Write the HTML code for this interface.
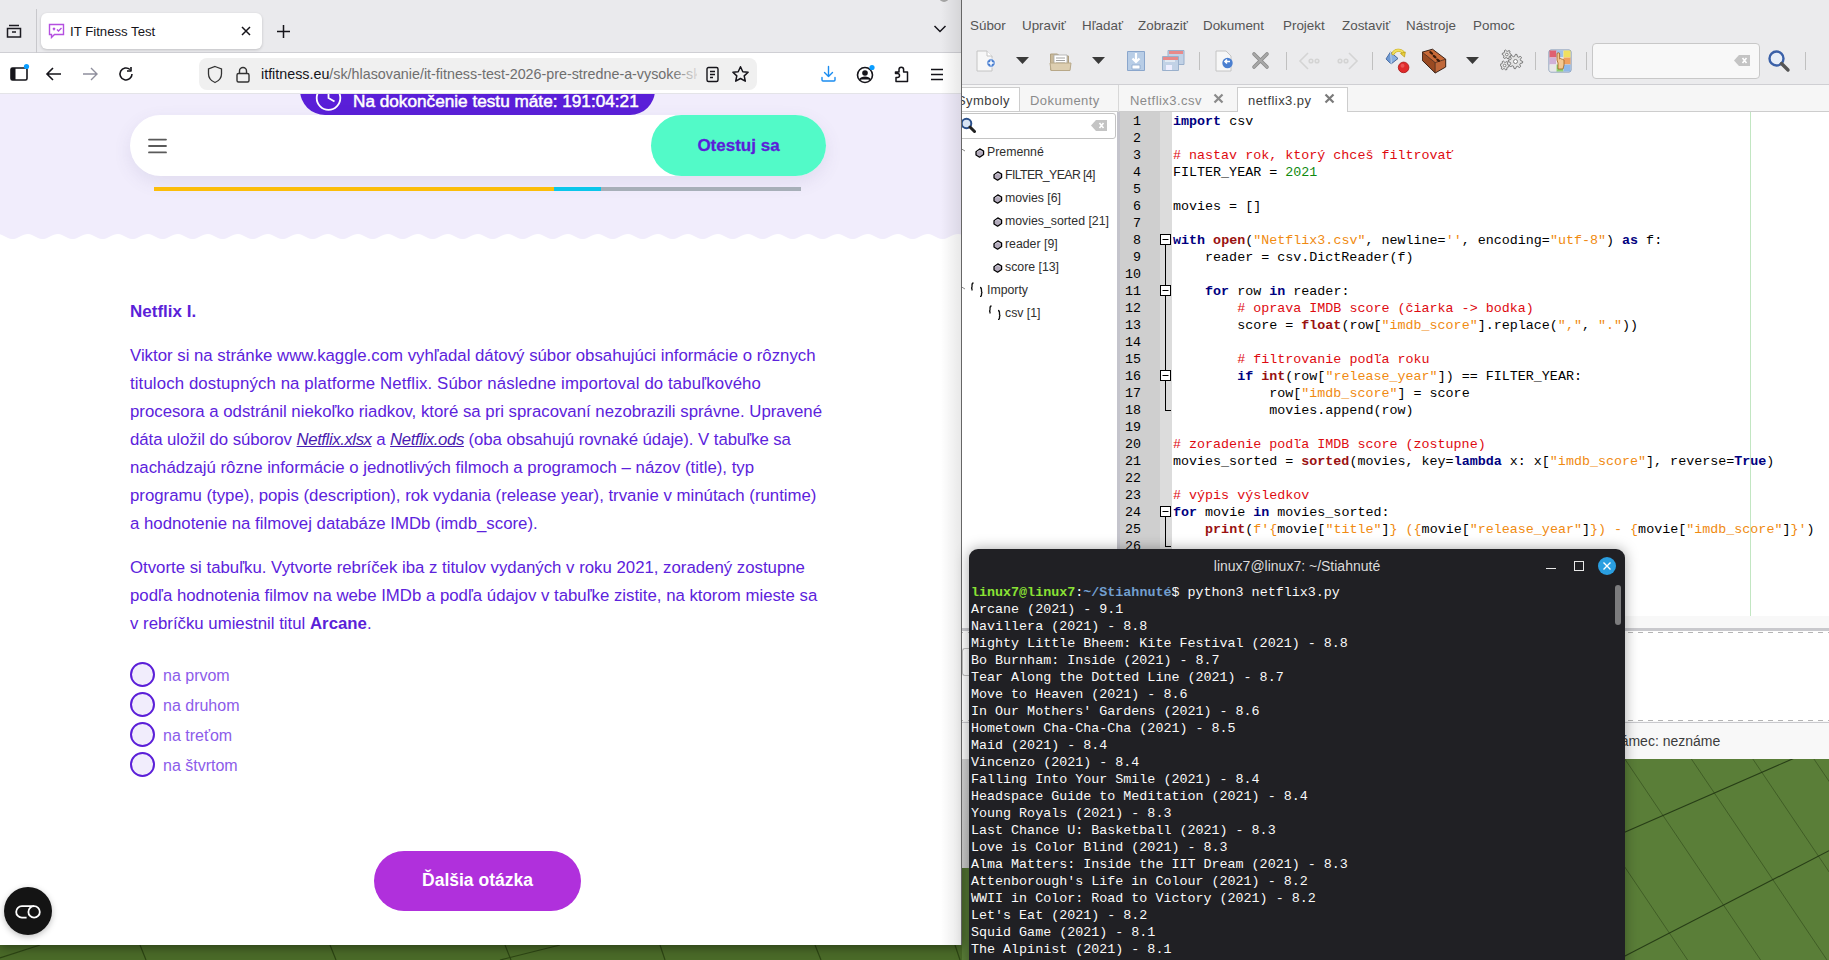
<!DOCTYPE html>
<html><head><meta charset="utf-8">
<style>
*{margin:0;padding:0;box-sizing:border-box}
html,body{width:1829px;height:960px;overflow:hidden;background:#587b36;font-family:"Liberation Sans",sans-serif}
.a{position:absolute}
.nw{white-space:nowrap}
#br{position:absolute;left:0;top:0;width:962px;height:945px;background:#fff;overflow:hidden;border-right:1px solid #666;box-shadow:0 2px 10px rgba(0,0,0,.45)}
#tabbar{position:absolute;left:0;top:0;width:961px;height:53px;background:#eaeaed;border-bottom:1px solid #cfcfd4}
#nav{position:absolute;left:0;top:53px;width:961px;height:41px;background:#fff;border-bottom:1px solid #e4e4e8}
#page{position:absolute;left:0;top:94px;width:961px;height:851px;background:#fff;overflow:hidden}
.ptxt{position:absolute;margin-top:1px;left:130px;font-size:16.8px;color:#5c22dc;white-space:nowrap;line-height:28px}
.radio{position:absolute;left:130px;width:25px;height:25px;border:2.2px solid #5b1fd8;border-radius:50%;background:#f1edfc}
.rlab{position:absolute;margin-top:1px;left:163px;font-size:16px;color:#8c5cea;white-space:nowrap;line-height:20px}
#gy{position:absolute;left:962px;top:0;width:867px;height:759px;background:#ebebed;overflow:hidden}
#term{position:absolute;left:969px;top:549px;width:656px;height:420px;background:#202024;border-radius:9px 9px 0 0;overflow:hidden;box-shadow:0 0 14px rgba(0,0,0,.35)}
.menu{position:absolute;top:16.5px;font-size:13.4px;line-height:18px;color:#555;white-space:nowrap}
.tabt{position:absolute;top:91.5px;font-size:13px;letter-spacing:.45px;line-height:18px;white-space:nowrap}
.tree{position:absolute;margin-top:1px;font-size:12.3px;line-height:18px;color:#2e2e2e;white-space:nowrap}
.cl{position:absolute;margin-top:2px;left:211px;font-family:"Liberation Mono",monospace;font-size:13.37px;line-height:17px;white-space:pre;color:#000}
.ln{position:absolute;margin-top:2px;left:154px;width:25px;text-align:right;font-family:"Liberation Mono",monospace;font-size:13.33px;line-height:17px;color:#000}
.cl .k{color:#000080;font-weight:700}.cl .b{color:#991111;font-weight:700}.cl .c{color:#de0a10}.cl .n{color:#108a10}.cl .s{color:#f08a10}
.tl{position:absolute;margin-top:2px;left:2px;font-family:"Liberation Mono",monospace;font-size:13.37px;line-height:17px;white-space:pre;color:#fafafa}
.mono{font-family:"Liberation Mono",monospace}
</style></head><body>

<svg class="a" style="left:0;top:0" width="1829" height="960" viewBox="0 0 1829 960">
<rect width="1829" height="960" fill="#5a7e38"/>
<g stroke="#2c4418" stroke-width="1" fill="none" opacity=".55">
<path d="M1585 700L1760.6 960M1651.6 700L1827 960M1713 700L1888.6 960M1774 700L1950 960M1512 700L1687.6 960"/>
</g>
<g stroke="#1e3210" stroke-width="1.1" fill="none" opacity=".85">
<path d="M1600 843L1829 743M1600 968.9L1829 850.7"/>
</g>
<rect x="0" y="940" width="962" height="20" fill="#4a6a28"/>
<g stroke="#2a4212" stroke-width="1.2" fill="none" opacity=".9">
<path d="M140 945l6 15M330 945l6 15M505 945l6 15M660 945l5 15M815 945l6 15M955 945l5 15"/>
<path d="M0 958l40-13M500 960l60-15"/>
</g>
</svg>
<div id="br">
  <div id="tabbar">
    <!-- collections icon -->
    <svg class="a" style="left:5px;top:22px" width="18" height="18" viewBox="0 0 18 18" fill="none" stroke="#1c1b22" stroke-width="1.5"><path d="M4 3.5h10M2.5 6.5h13v8.5h-13z"/><path d="M7 10h4"/></svg>
    <div class="a" style="left:36px;top:9px;width:1px;height:44px;background:#c8c8cc"></div>
    <div class="a" style="left:41px;top:13px;width:221px;height:36px;background:#fff;border-radius:6px;box-shadow:0 1px 3px rgba(0,0,0,.18)"></div>
    <svg class="a" style="left:48px;top:23px" width="17" height="16" viewBox="0 0 17 16" fill="none" stroke="#b44fe0" stroke-width="1.4"><path d="M1.5 1.5h14v10h-9l-3 3v-3h-2z"/><path d="M5 5l2 2M7 5l-2 2M9 6.5l1.5 1.5 3-3"/></svg>
    <div class="a nw" style="left:70px;top:23px;font-size:13.2px;color:#15141a;line-height:18px">IT Fitness Test</div>
    <svg class="a" style="left:240px;top:25px" width="12" height="12" viewBox="0 0 12 12" stroke="#15141a" stroke-width="1.5"><path d="M2 2l8 8M10 2l-8 8"/></svg>
    <svg class="a" style="left:276px;top:24px" width="15" height="15" viewBox="0 0 15 15" stroke="#15141a" stroke-width="1.5"><path d="M7.5 1v13M1 7.5h13"/></svg>
    <svg class="a" style="left:933px;top:24px" width="14" height="10" viewBox="0 0 14 10" fill="none" stroke="#15141a" stroke-width="1.5"><path d="M1.5 2l5.5 5.5 5.5-5.5"/></svg>
    <div class="a" style="left:939px;top:-8px;width:10px;height:10px;border-radius:50%;background:#a5a5a5"></div>
  </div>
  <div id="nav">
    <svg class="a" style="left:9px;top:10px" width="22" height="20" viewBox="0 0 22 20"><rect x="2" y="5" width="16" height="12" rx="1.5" fill="none" stroke="#15141a" stroke-width="1.6"/><rect x="2" y="5" width="4.5" height="12" fill="#15141a"/><circle cx="17.5" cy="3.5" r="2.6" fill="#0a9dff"/></svg>
    <svg class="a" style="left:45px;top:13px" width="18" height="16" viewBox="0 0 18 16" fill="none" stroke="#15141a" stroke-width="1.6"><path d="M16 8H2M8 2L2 8l6 6"/></svg>
    <svg class="a" style="left:81px;top:13px" width="18" height="16" viewBox="0 0 18 16" fill="none" stroke="#8f8f9d" stroke-width="1.4"><path d="M2 8h14M10 2l6 6-6 6"/></svg>
    <svg class="a" style="left:117px;top:12px" width="18" height="18" viewBox="0 0 18 18" fill="none" stroke="#15141a" stroke-width="1.6"><path d="M15 9a6 6 0 1 1-2-4.5"/><path d="M14 2v4h-4" stroke-linejoin="round"/></svg>
    <div class="a" style="left:199px;top:5px;width:558px;height:32px;background:#f0f0f0;border-radius:8px"></div>
    <svg class="a" style="left:206px;top:12px" width="18" height="19" viewBox="0 0 18 19" fill="none" stroke="#333" stroke-width="1.3"><path d="M9 1.5l6.5 2.5v5c0 4-3 7-6.5 8.5C5.5 16 2.5 13 2.5 9V4z"/></svg>
    <svg class="a" style="left:235px;top:12px" width="16" height="19" viewBox="0 0 16 19" fill="none" stroke="#333" stroke-width="1.4"><rect x="2" y="8.5" width="12" height="8.5" rx="1.5"/><path d="M4.5 8.5V6a3.5 3.5 0 0 1 7 0v2.5"/></svg>
    <div class="a nw" style="left:261px;top:11px;width:436px;overflow:hidden;font-size:14.3px;line-height:20px;color:#6e6e6e"><span style="color:#15141a">itfitness.eu</span>/sk/hlasovanie/it-fitness-test-2026-pre-stredne-a-vysoke-sk</div>
    <div class="a" style="left:672px;top:8px;width:30px;height:26px;background:linear-gradient(90deg,rgba(240,240,240,0),#f0f0f0)"></div>
    <svg class="a" style="left:705px;top:13px" width="16" height="17" viewBox="0 0 16 17" fill="none" stroke="#15141a" stroke-width="1.4"><rect x="2" y="1.5" width="11" height="14" rx="1.5"/><path d="M5 5.5h5M5 8.5h5M5 11.5h3"/></svg>
    <svg class="a" style="left:731px;top:12px" width="19" height="19" viewBox="0 0 19 19" fill="none" stroke="#15141a" stroke-width="1.5" stroke-linejoin="round"><path d="M9.5 1.8l2.3 4.9 5.3.6-3.9 3.6 1.1 5.3-4.8-2.7-4.8 2.7 1.1-5.3L1.9 7.3l5.3-.6z"/></svg>
    <svg class="a" style="left:819px;top:11px" width="19" height="19" viewBox="0 0 19 19" fill="none" stroke="#1a8cf0" stroke-width="1.4" stroke-linecap="round" stroke-linejoin="round"><path d="M9.5 2.5v10M5.5 8.5l4 4 4-4M3 13.5v2.5a1 1 0 0 0 1 1h11a1 1 0 0 0 1-1v-2.5"/></svg>
    <svg class="a" style="left:855px;top:10px" width="22" height="22" viewBox="0 0 22 22"><circle cx="10" cy="12" r="7.5" fill="none" stroke="#15141a" stroke-width="1.6"/><circle cx="10" cy="10" r="2.8" fill="#15141a"/><path d="M4.8 16.5c2-3 8.4-3 10.4 0" fill="#15141a" stroke="#15141a" stroke-width="1.5"/><circle cx="17" cy="4.5" r="2.6" fill="#0a9dff"/></svg>
    <svg class="a" style="left:893px;top:11px" width="18" height="19" viewBox="0 0 18 19" fill="none" stroke="#15141a" stroke-width="1.5" stroke-linejoin="round"><path d="M2.5 8h3.5V5.5a2.3 2.3 0 0 1 4.6 0V8h3.9v9.5H3V13.5h1.5a2 2 0 0 0 0-4H2.5z"/></svg>
    <svg class="a" style="left:929px;top:14px" width="16" height="14" viewBox="0 0 16 14" stroke="#15141a" stroke-width="1.5"><path d="M2 2.5h12M2 7.5h12M2 12.5h12"/></svg>
  </div>
  <div id="page">
    <!-- lavender header with wave -->
    <svg class="a" style="left:0;top:0" width="961" height="150" viewBox="0 0 961 150">
      <path d="M0 0H961V140.61 L960 140.31 L958 140.01 L956 140.14 L954 140.68 L952 141.53 L950 142.55 L948 143.56 L946 144.39 L944 144.89 L942 144.98 L940 144.64 L938 143.93 L936 142.97 L934 141.93 L932 140.99 L930 140.31 L928 140.01 L926 140.14 L924 140.68 L922 141.53 L920 142.55 L918 143.56 L916 144.39 L914 144.89 L912 144.98 L910 144.64 L908 143.93 L906 142.97 L904 141.93 L902 140.99 L900 140.31 L898 140.01 L896 140.14 L894 140.68 L892 141.53 L890 142.55 L888 143.56 L886 144.39 L884 144.89 L882 144.98 L880 144.64 L878 143.93 L876 142.97 L874 141.93 L872 140.99 L870 140.31 L868 140.01 L866 140.14 L864 140.68 L862 141.53 L860 142.55 L858 143.56 L856 144.39 L854 144.89 L852 144.98 L850 144.64 L848 143.93 L846 142.97 L844 141.93 L842 140.99 L840 140.31 L838 140.01 L836 140.14 L834 140.68 L832 141.53 L830 142.55 L828 143.56 L826 144.39 L824 144.89 L822 144.98 L820 144.64 L818 143.93 L816 142.97 L814 141.93 L812 140.99 L810 140.31 L808 140.01 L806 140.14 L804 140.68 L802 141.53 L800 142.55 L798 143.56 L796 144.39 L794 144.89 L792 144.98 L790 144.64 L788 143.93 L786 142.97 L784 141.93 L782 140.99 L780 140.31 L778 140.01 L776 140.14 L774 140.68 L772 141.53 L770 142.55 L768 143.56 L766 144.39 L764 144.89 L762 144.98 L760 144.64 L758 143.93 L756 142.97 L754 141.93 L752 140.99 L750 140.31 L748 140.01 L746 140.14 L744 140.68 L742 141.53 L740 142.55 L738 143.56 L736 144.39 L734 144.89 L732 144.98 L730 144.64 L728 143.93 L726 142.97 L724 141.93 L722 140.99 L720 140.31 L718 140.01 L716 140.14 L714 140.68 L712 141.53 L710 142.55 L708 143.56 L706 144.39 L704 144.89 L702 144.98 L700 144.64 L698 143.93 L696 142.97 L694 141.93 L692 140.99 L690 140.31 L688 140.01 L686 140.14 L684 140.68 L682 141.53 L680 142.55 L678 143.56 L676 144.39 L674 144.89 L672 144.98 L670 144.64 L668 143.93 L666 142.97 L664 141.93 L662 140.99 L660 140.31 L658 140.01 L656 140.14 L654 140.68 L652 141.53 L650 142.55 L648 143.56 L646 144.39 L644 144.89 L642 144.98 L640 144.64 L638 143.93 L636 142.97 L634 141.93 L632 140.99 L630 140.31 L628 140.01 L626 140.14 L624 140.68 L622 141.53 L620 142.55 L618 143.56 L616 144.39 L614 144.89 L612 144.98 L610 144.64 L608 143.93 L606 142.97 L604 141.93 L602 140.99 L600 140.31 L598 140.01 L596 140.14 L594 140.68 L592 141.53 L590 142.55 L588 143.56 L586 144.39 L584 144.89 L582 144.98 L580 144.64 L578 143.93 L576 142.97 L574 141.93 L572 140.99 L570 140.31 L568 140.01 L566 140.14 L564 140.68 L562 141.53 L560 142.55 L558 143.56 L556 144.39 L554 144.89 L552 144.98 L550 144.64 L548 143.93 L546 142.97 L544 141.93 L542 140.99 L540 140.31 L538 140.01 L536 140.14 L534 140.68 L532 141.53 L530 142.55 L528 143.56 L526 144.39 L524 144.89 L522 144.98 L520 144.64 L518 143.93 L516 142.97 L514 141.93 L512 140.99 L510 140.31 L508 140.01 L506 140.14 L504 140.68 L502 141.53 L500 142.55 L498 143.56 L496 144.39 L494 144.89 L492 144.98 L490 144.64 L488 143.93 L486 142.97 L484 141.93 L482 140.99 L480 140.31 L478 140.01 L476 140.14 L474 140.68 L472 141.53 L470 142.55 L468 143.56 L466 144.39 L464 144.89 L462 144.98 L460 144.64 L458 143.93 L456 142.97 L454 141.93 L452 140.99 L450 140.31 L448 140.01 L446 140.14 L444 140.68 L442 141.53 L440 142.55 L438 143.56 L436 144.39 L434 144.89 L432 144.98 L430 144.64 L428 143.93 L426 142.97 L424 141.93 L422 140.99 L420 140.31 L418 140.01 L416 140.14 L414 140.68 L412 141.53 L410 142.55 L408 143.56 L406 144.39 L404 144.89 L402 144.98 L400 144.64 L398 143.93 L396 142.97 L394 141.93 L392 140.99 L390 140.31 L388 140.01 L386 140.14 L384 140.68 L382 141.53 L380 142.55 L378 143.56 L376 144.39 L374 144.89 L372 144.98 L370 144.64 L368 143.93 L366 142.97 L364 141.93 L362 140.99 L360 140.31 L358 140.01 L356 140.14 L354 140.68 L352 141.53 L350 142.55 L348 143.56 L346 144.39 L344 144.89 L342 144.98 L340 144.64 L338 143.93 L336 142.97 L334 141.93 L332 140.99 L330 140.31 L328 140.01 L326 140.14 L324 140.68 L322 141.53 L320 142.55 L318 143.56 L316 144.39 L314 144.89 L312 144.98 L310 144.64 L308 143.93 L306 142.97 L304 141.93 L302 140.99 L300 140.31 L298 140.01 L296 140.14 L294 140.68 L292 141.53 L290 142.55 L288 143.56 L286 144.39 L284 144.89 L282 144.98 L280 144.64 L278 143.93 L276 142.97 L274 141.93 L272 140.99 L270 140.31 L268 140.01 L266 140.14 L264 140.68 L262 141.53 L260 142.55 L258 143.56 L256 144.39 L254 144.89 L252 144.98 L250 144.64 L248 143.93 L246 142.97 L244 141.93 L242 140.99 L240 140.31 L238 140.01 L236 140.14 L234 140.68 L232 141.53 L230 142.55 L228 143.56 L226 144.39 L224 144.89 L222 144.98 L220 144.64 L218 143.93 L216 142.97 L214 141.93 L212 140.99 L210 140.31 L208 140.01 L206 140.14 L204 140.68 L202 141.53 L200 142.55 L198 143.56 L196 144.39 L194 144.89 L192 144.98 L190 144.64 L188 143.93 L186 142.97 L184 141.93 L182 140.99 L180 140.31 L178 140.01 L176 140.14 L174 140.68 L172 141.53 L170 142.55 L168 143.56 L166 144.39 L164 144.89 L162 144.98 L160 144.64 L158 143.93 L156 142.97 L154 141.93 L152 140.99 L150 140.31 L148 140.01 L146 140.14 L144 140.68 L142 141.53 L140 142.55 L138 143.56 L136 144.39 L134 144.89 L132 144.98 L130 144.64 L128 143.93 L126 142.97 L124 141.93 L122 140.99 L120 140.31 L118 140.01 L116 140.14 L114 140.68 L112 141.53 L110 142.55 L108 143.56 L106 144.39 L104 144.89 L102 144.98 L100 144.64 L98 143.93 L96 142.97 L94 141.93 L92 140.99 L90 140.31 L88 140.01 L86 140.14 L84 140.68 L82 141.53 L80 142.55 L78 143.56 L76 144.39 L74 144.89 L72 144.98 L70 144.64 L68 143.93 L66 142.97 L64 141.93 L62 140.99 L60 140.31 L58 140.01 L56 140.14 L54 140.68 L52 141.53 L50 142.55 L48 143.56 L46 144.39 L44 144.89 L42 144.98 L40 144.64 L38 143.93 L36 142.97 L34 141.93 L32 140.99 L30 140.31 L28 140.01 L26 140.14 L24 140.68 L22 141.53 L20 142.55 L18 143.56 L16 144.39 L14 144.89 L12 144.98 L10 144.64 L8 143.93 L6 142.97 L4 141.93 L2 140.99 L0 140.31 Z" fill="#f1edfc"/>
    </svg>
    <!-- timer pill -->
    <div class="a" style="left:300px;top:-30px;width:355px;height:51px;background:#5a1fd8;border-radius:25px"></div>
    <svg class="a" style="left:314px;top:-11px" width="30" height="30" viewBox="0 0 30 30" fill="none" stroke="#fff" stroke-width="1.8"><circle cx="14.5" cy="15" r="11.8"/><path d="M14.5 6v9l6 3.5"/></svg>
    <div class="a nw" style="left:353px;top:-3px;font-size:17.2px;font-weight:400;-webkit-text-stroke:.5px #fff;color:#fff;line-height:20px">Na dokončenie testu máte: 191:04:21</div>
    <!-- card -->
    <div class="a" style="left:130px;top:21px;width:696px;height:61px;background:#fff;border-radius:31px;box-shadow:0 6px 18px rgba(90,80,140,.11)"></div>
    <svg class="a" style="left:147px;top:43px" width="21" height="17" viewBox="0 0 21 17" stroke="#5a5a5a" stroke-width="1.8" stroke-linecap="round"><path d="M2 2.6h17M2 9h17M2 15.4h17"/></svg>
    <div class="a" style="left:651px;top:21px;width:175px;height:61px;background:#52fac8;border-radius:31px"></div>
    <div class="a nw" style="left:651px;top:41px;width:175px;text-align:center;font-size:17px;font-weight:700;color:#5b1fd8;-webkit-text-stroke:.3px #5b1fd8;line-height:22px">Otestuj sa</div>
    <!-- progress -->
    <div class="a" style="left:154px;top:93px;width:400px;height:4px;background:#fbbd0a"></div>
    <div class="a" style="left:554px;top:93px;width:47px;height:4px;background:#0bc6ea"></div>
    <div class="a" style="left:601px;top:93px;width:200px;height:4px;background:#a7afb8"></div>

    <div class="a nw" style="left:130px;top:208px;font-size:17px;font-weight:700;color:#5b1fd8;line-height:20px">Netflix I.</div>
    <div class="ptxt" style="top:247px">Viktor si na stránke www.kaggle.com vyhľadal dátový súbor obsahujúci informácie o rôznych</div>
    <div class="ptxt" style="top:275px;letter-spacing:.116px">tituloch dostupných na platforme Netflix. Súbor následne importoval do tabuľkového</div>
    <div class="ptxt" style="top:303px">procesora a odstránil niekoľko riadkov, ktoré sa pri spracovaní nezobrazili správne. Upravené</div>
    <div class="ptxt" style="top:331px;letter-spacing:-.06px">dáta uložil do súborov <i style="text-decoration:underline;color:#4a1bb0;letter-spacing:-.43px">Netflix.xlsx</i> a <i style="text-decoration:underline;color:#4a1bb0;letter-spacing:-.41px">Netflix.ods</i> (oba obsahujú rovnaké údaje). V tabuľke sa</div>
    <div class="ptxt" style="top:359px">nachádzajú rôzne informácie o jednotlivých filmoch a programoch – názov (title), typ</div>
    <div class="ptxt" style="top:387px">programu (type), popis (description), rok vydania (release year), trvanie v minútach (runtime)</div>
    <div class="ptxt" style="top:415px">a hodnotenie na filmovej databáze IMDb (imdb_score).</div>
    <div class="ptxt" style="top:459px">Otvorte si tabuľku. Vytvorte rebríček iba z titulov vydaných v roku 2021, zoradený zostupne</div>
    <div class="ptxt" style="top:487px">podľa hodnotenia filmov na webe IMDb a podľa údajov v tabuľke zistite, na ktorom mieste sa</div>
    <div class="ptxt" style="top:515px">v rebríčku umiestnil titul <b style="color:#5b1fd8">Arcane</b>.</div>

    <div class="radio" style="top:568px"></div><div class="rlab" style="top:571px">na prvom</div>
    <div class="radio" style="top:598px"></div><div class="rlab" style="top:601px">na druhom</div>
    <div class="radio" style="top:628px"></div><div class="rlab" style="top:631px">na treťom</div>
    <div class="radio" style="top:658px"></div><div class="rlab" style="top:661px">na štvrtom</div>

    <div class="a" style="left:374px;top:757px;width:207px;height:60px;background:#b030dc;border-radius:30px"></div>
    <div class="a nw" style="left:374px;top:775px;width:207px;text-align:center;font-size:17.5px;font-weight:700;color:#fff;line-height:22px">Ďalšia otázka</div>

    <div class="a" style="left:4px;top:793px;width:48px;height:48px;background:#141414;border-radius:50%;box-shadow:0 2px 6px rgba(0,0,0,.25)"></div>
    <svg class="a" style="left:15px;top:809px" width="28" height="20" viewBox="0 0 28 20" fill="none" stroke="#fff" stroke-width="1.8"><path d="M11.6 14.6H6.9A5.7 5.7 0 0 1 6.9 3.2H19"/><circle cx="19.1" cy="8.9" r="5.7"/></svg>
  </div>
  <div class="a" style="left:941px;top:0;width:20px;height:945px;background:linear-gradient(90deg,rgba(0,0,0,0),rgba(0,0,0,.09))"></div>
</div>

<div id="gy">
  <!-- title bar remnants -->
  
  <!-- menu -->
  <div class="menu" style="left:8px">Súbor</div>
  <div class="menu" style="left:60px">Upraviť</div>
  <div class="menu" style="left:120px">Hľadať</div>
  <div class="menu" style="left:176px">Zobraziť</div>
  <div class="menu" style="left:241px">Dokument</div>
  <div class="menu" style="left:321px">Projekt</div>
  <div class="menu" style="left:380px">Zostaviť</div>
  <div class="menu" style="left:444px">Nástroje</div>
  <div class="menu" style="left:511px">Pomoc</div>
  <!-- toolbar -->
  
  <svg class="a" style="left:13px;top:49px" width="22" height="24" viewBox="0 0 22 24">
    <path d="M2 2h10l5 5v15H2z" fill="#f7f7f7" stroke="#c4c4c4" stroke-width="1"/><path d="M12 2v5h5" fill="#fff" stroke="#c4c4c4"/>
    <circle cx="16" cy="14" r="4.2" fill="#4a7fd0" stroke="#fff" stroke-width=".8"/><path d="M16 11.5v5M13.5 14h5" stroke="#fff" stroke-width="1.5"/>
  </svg>
  <svg class="a" style="left:54px;top:57px" width="13" height="8" viewBox="0 0 13 8"><path d="M0 0h13l-6.5 7z" fill="#3a3a3a"/></svg>
  <svg class="a" style="left:87px;top:49px" width="23" height="24" viewBox="0 0 23 24">
    <path d="M1.5 5h7l2 2h9v14H1.5z" fill="#c9b99a" stroke="#b0a080" stroke-width="1"/>
    <path d="M5 6h13v11H5z" fill="#fff" stroke="#a8a8a8" stroke-width=".8"/><path d="M7 9h9M7 11.5h9M7 14h9" stroke="#8a8a8a" stroke-width=".8"/>
    <path d="M1 14h21l-1 7.5H2z" fill="#ddceb0" stroke="#b8a888" stroke-width="1"/>
  </svg>
  <svg class="a" style="left:130px;top:57px" width="13" height="8" viewBox="0 0 13 8"><path d="M0 0h13l-6.5 7z" fill="#3a3a3a"/></svg>
  <svg class="a" style="left:164px;top:49px" width="20" height="24" viewBox="0 0 20 24">
    <path d="M1.5 2.5h17v19h-17z" rx="2" fill="#b8cde6" stroke="#8aa6cc" stroke-width="1"/>
    <path d="M10 4v9M6.5 9.5L10 13l3.5-3.5" stroke="#fff" stroke-width="2.2" fill="none"/><path d="M6 16h8v4H6z" fill="#fff" stroke="#8aa6cc" stroke-width=".8"/>
  </svg>
  <svg class="a" style="left:199px;top:49px" width="25" height="24" viewBox="0 0 25 24">
    <path d="M7 1.5h16v14H7z" fill="#c2d2e6" stroke="#9ab0cc"/><path d="M8 2h14v3H8z" fill="#e88a8a"/>
    <path d="M1.5 7.5h16v14h-16z" fill="#c2d2e6" stroke="#9ab0cc"/><path d="M2 8h15v3H2z" fill="#e88a8a"/><path d="M4 12h10" stroke="#fff"/><path d="M5 16h6v5H5z" fill="#eef"/>
  </svg>
  <div class="a" style="left:237px;top:52px;width:1px;height:18px;background:#c0c0c0"></div>
  <svg class="a" style="left:252px;top:49px" width="21" height="24" viewBox="0 0 21 24">
    <path d="M2 2h10l5 5v15H2z" fill="#f7f7f7" stroke="#c4c4c4"/><circle cx="13.5" cy="14" r="5.2" fill="#4a7fd0"/><path d="M16 12.5h-4.5M13 10.5l-2 2 2 2" stroke="#fff" stroke-width="1.6" fill="none"/>
  </svg>
  <svg class="a" style="left:289px;top:51px" width="19" height="19" viewBox="0 0 19 19"><path d="M3 3l13 13M16 3L3 16" stroke="#8a8a8a" stroke-width="3.6" stroke-linecap="round"/><path d="M3 3l13 13M16 3L3 16" stroke="#a8a8a8" stroke-width="2" stroke-linecap="round"/></svg>
  <div class="a" style="left:324px;top:52px;width:1px;height:18px;background:#c0c0c0"></div>
  <svg class="a" style="left:336px;top:51px" width="23" height="20" viewBox="0 0 23 20" fill="none" stroke="#d4d4d4" stroke-width="1.6"><path d="M10 2L2 10l8 8M5 10h0"/><circle cx="13" cy="10" r="1.8"/><circle cx="19" cy="10" r="1.8"/></svg>
  <svg class="a" style="left:374px;top:51px" width="23" height="20" viewBox="0 0 23 20" fill="none" stroke="#d4d4d4" stroke-width="1.6"><path d="M13 2l8 8-8 8"/><circle cx="4" cy="10" r="1.8"/><circle cx="10" cy="10" r="1.8"/></svg>
  <div class="a" style="left:410px;top:52px;width:1px;height:18px;background:#c0c0c0"></div>
  <svg class="a" style="left:423px;top:48px" width="26" height="26" viewBox="0 0 26 26">
    <path d="M1 11L5.5 4 13 10.5 6 16z" fill="#8ab0e0" stroke="#3a5a90" stroke-width=".9" stroke-linejoin="round"/>
    <path d="M5.5 4L6 16" stroke="#e8f0fa" stroke-width="1"/><path d="M5.5 4L1 11 6 16z" fill="#5a88c8" opacity=".6"/>
    <path d="M8 5.5C10 1.5 16 1 18.5 5" fill="none" stroke="#c8a818" stroke-width="3.2" stroke-linecap="round"/>
    <path d="M8 5.5C10 1.5 16 1 18.5 5" fill="none" stroke="#f0e060" stroke-width="1.8" stroke-linecap="round"/>
    <path d="M15.5 5.5l4.8-1.5-.8 5z" fill="#e8d040" stroke="#b89810" stroke-width=".7"/>
    <circle cx="18.6" cy="19.4" r="5.3" fill="#e02a2a" stroke="#a81818" stroke-width=".8"/>
    <circle cx="17.5" cy="17.8" r="2" fill="#f07070" opacity=".6"/>
  </svg>
  <svg class="a" style="left:460px;top:48px" width="26" height="27" viewBox="0 0 26 27">
    <path d="M.3 4.1L10.5 1.2 23.7 11.2 13.2 14.6z" fill="#c96a38"/>
    <path d="M.3 4.1L13.2 14.6V25L.3 12.4z" fill="#9a4a22"/>
    <path d="M13.2 14.6L23.7 11.2V19L13.2 25z" fill="#c0683a"/>
    <path d="M.3 4.1L10.5 1.2 23.7 11.2V19L13.2 25 .3 12.4z" fill="none" stroke="#2a140a" stroke-width=".9" stroke-linejoin="round"/>
    <path d="M13.2 14.6V25M.3 4.1L13.2 14.6 23.7 11.2" stroke="#3a1a0a" stroke-width=".7" fill="none"/>
    <ellipse cx="9.2" cy="4.9" rx="2.3" ry="1.2" transform="rotate(38 9.2 4.9)" fill="#3a1a0a"/>
    <ellipse cx="12.6" cy="8.6" rx="2.3" ry="1.2" transform="rotate(38 12.6 8.6)" fill="#3a1a0a"/>
    <ellipse cx="16.1" cy="12.2" rx="2.3" ry="1.2" transform="rotate(38 16.1 12.2)" fill="#3a1a0a"/>
  </svg>
  <svg class="a" style="left:504px;top:57px" width="13" height="8" viewBox="0 0 13 8"><path d="M0 0h13l-6.5 7z" fill="#3a3a3a"/></svg>
  <svg class="a" style="left:538px;top:48px" width="26" height="26" viewBox="0 0 26 26">
    <g fill="#e4e4e4" stroke="#6a6a6a" stroke-width=".9" stroke-linejoin="round">
    <path d="M22.70 13.50 L22.56 14.90 L20.29 15.48 L19.81 16.38 L20.59 18.59 L19.50 19.49 L17.48 18.29 L16.51 18.58 L15.50 20.70 L14.10 20.56 L13.52 18.29 L12.62 17.81 L10.41 18.59 L9.51 17.50 L10.71 15.48 L10.42 14.51 L8.30 13.50 L8.44 12.10 L10.71 11.52 L11.19 10.62 L10.41 8.41 L11.50 7.51 L13.52 8.71 L14.49 8.42 L15.50 6.30 L16.90 6.44 L17.48 8.71 L18.38 9.19 L20.59 8.41 L21.49 9.50 L20.29 11.52 L20.58 12.49Z"/>
    <path d="M11.40 6.50 L11.24 7.69 L9.67 8.16 L9.14 8.84 L9.10 10.48 L7.99 10.94 L6.80 9.81 L5.94 9.70 L4.50 10.48 L3.55 9.75 L3.93 8.16 L3.60 7.36 L2.20 6.50 L2.36 5.31 L3.93 4.84 L4.46 4.16 L4.50 2.52 L5.61 2.06 L6.80 3.19 L7.66 3.30 L9.10 2.52 L10.05 3.25 L9.67 4.84 L10.00 5.64Z"/>
    <path d="M9.20 17.50 L9.04 18.69 L7.47 19.16 L6.94 19.84 L6.90 21.48 L5.79 21.94 L4.60 20.81 L3.74 20.70 L2.30 21.48 L1.35 20.75 L1.73 19.16 L1.40 18.36 L0.00 17.50 L0.16 16.31 L1.73 15.84 L2.26 15.16 L2.30 13.52 L3.41 13.06 L4.60 14.19 L5.46 14.30 L6.90 13.52 L7.85 14.25 L7.47 15.84 L7.80 16.64Z"/>
    </g>
    <g fill="#fff" stroke="#6a6a6a" stroke-width=".8"><circle cx="15.5" cy="13.5" r="2"/><circle cx="6.8" cy="6.5" r="1.3"/><circle cx="4.6" cy="17.5" r="1.3"/></g>
  </svg>
  <div class="a" style="left:573px;top:52px;width:1px;height:18px;background:#c0c0c0"></div>
  <svg class="a" style="left:586px;top:49px" width="24" height="24" viewBox="0 0 24 24">
    <rect x="1" y="1" width="22" height="22" rx="2" fill="#fff" stroke="#7890b0"/>
    <path d="M1.5 1.5h7v7h-7z" fill="#e06070"/><path d="M8.5 1.5h7v7h-7z" fill="#a0c0e8"/><path d="M15.5 1.5h7v7h-7z" fill="#f0e060"/>
    <path d="M1.5 8.5h7v7h-7z" fill="#d0b0d8"/><path d="M8.5 8.5h7v7h-7z" fill="#f0f0f0"/><path d="M15.5 8.5h7v7h-7z" fill="#f0a060"/>
    <path d="M1.5 15.5h7v7h-7z" fill="#e8e8e8"/><path d="M8.5 15.5h7v7h-7z" fill="#90d070"/><path d="M15.5 15.5h7v7h-7z" fill="#90b8e8"/>
    <path d="M10 20v-6l-1-3v-6a1.3 1.3 0 0 1 2.6 0v5l1-.5 1 .5 1 .3 1.4.7v5l-1 4z" fill="#f4c890" stroke="#a06020" stroke-width=".8"/>
  </svg>
  <div class="a" style="left:624px;top:52px;width:1px;height:18px;background:#c0c0c0"></div>
  <div class="a" style="left:630px;top:43px;width:168px;height:36px;background:#f8f8f8;border:1px solid #c8c8c8;border-radius:4px"></div>
  <svg class="a" style="left:772px;top:54px" width="17" height="13" viewBox="0 0 17 13"><path d="M5 1h11v11H5L0 6.5z" fill="#c4c4c4"/><path d="M8.5 4l4 5M12.5 4l-4 5" stroke="#fff" stroke-width="1.6"/></svg>
  <svg class="a" style="left:805px;top:49px" width="24" height="24" viewBox="0 0 24 24"><circle cx="9.5" cy="9.5" r="7" fill="#e8eef8" stroke="#3a60a8" stroke-width="2.4"/><path d="M14.5 14.5l6.5 6.5" stroke="#555" stroke-width="3.4" stroke-linecap="round"/></svg>
  <div class="a" style="left:843px;top:52px;width:1px;height:18px;background:#c0c0c0"></div>

  <div class="a" style="left:0;top:84px;width:867px;height:1px;background:#cfcfd3"></div>
  <!-- tab row -->
  <div class="a" style="left:0;top:85px;width:867px;height:27px;background:#f6f6f6"></div>
  <div class="a" style="left:0;top:111px;width:867px;height:1px;background:#cdcdcd"></div>
  <div class="a" style="left:-4px;top:87px;width:62px;height:24px;background:#fff;border:1px solid #cdcdcd;border-bottom:none"></div>
  <div class="tabt" style="left:-5px;color:#3c3c3c">Symboly</div>
  <div class="tabt" style="left:68px;color:#8b8b8b">Dokumenty</div>
  <div class="a" style="left:156px;top:85px;width:1px;height:27px;background:#d8d8d8"></div>
  <div class="tabt" style="left:168px;color:#8b8b8b">Netflix3.csv</div>
  <svg class="a" style="left:251px;top:93px" width="11" height="11" viewBox="0 0 11 11" stroke="#8a8a8a" stroke-width="2.2"><path d="M1.5 1.5l8 8M9.5 1.5l-8 8"/></svg>
  <div class="a" style="left:275px;top:87px;width:111px;height:25px;background:#fff;border:1px solid #cdcdcd;border-bottom:none"></div>
  <div class="tabt" style="left:286px;color:#3c3c3c">netflix3.py</div>
  <svg class="a" style="left:362px;top:93px" width="11" height="11" viewBox="0 0 11 11" stroke="#7a7a7a" stroke-width="2.2"><path d="M1.5 1.5l8 8M9.5 1.5l-8 8"/></svg>
  <!-- sidebar -->
  <div class="a" style="left:0;top:112px;width:156px;height:516px;background:#fff"></div>
  <div class="a" style="left:-4px;top:113px;width:158px;height:26px;background:#fff;border:1px solid #c4c4c4;border-radius:3px"></div>
  <svg class="a" style="left:-2px;top:117px" width="16" height="17" viewBox="0 0 16 17"><circle cx="6.5" cy="6.5" r="4.8" fill="#d8e4f4" stroke="#2a4f8a" stroke-width="2"/><path d="M10 10l4.5 4.5" stroke="#222" stroke-width="3" stroke-linecap="round"/></svg>
  <svg class="a" style="left:129px;top:119px" width="17" height="13" viewBox="0 0 17 13"><path d="M5 1h11v11H5L0 6.5z" fill="#c4c4c4"/><path d="M8.5 4l4 5M12.5 4l-4 5" stroke="#fff" stroke-width="1.6"/></svg>
  <svg class="a" style="left:13px;top:148px" width="10" height="10" viewBox="0 0 10 10"><path d="M4.8 .9L8.6 3v3.4L4.6 9.2 1 7V3.7z" fill="#b2aabb" stroke="#000" stroke-width="1.25" stroke-linejoin="round"/><path d="M2 4l2.5-1.5 2.5 1" stroke="#d8d4e0" stroke-width=".8" fill="none"/></svg><div class="tree" style="left:25px;top:142px">Premenné</div>
<svg class="a" style="left:31px;top:171px" width="10" height="10" viewBox="0 0 10 10"><path d="M4.8 .9L8.6 3v3.4L4.6 9.2 1 7V3.7z" fill="#b2aabb" stroke="#000" stroke-width="1.25" stroke-linejoin="round"/><path d="M2 4l2.5-1.5 2.5 1" stroke="#d8d4e0" stroke-width=".8" fill="none"/></svg><div class="tree" style="left:43px;top:165px;letter-spacing:-.6px">FILTER_YEAR [4]</div>
<svg class="a" style="left:31px;top:194px" width="10" height="10" viewBox="0 0 10 10"><path d="M4.8 .9L8.6 3v3.4L4.6 9.2 1 7V3.7z" fill="#b2aabb" stroke="#000" stroke-width="1.25" stroke-linejoin="round"/><path d="M2 4l2.5-1.5 2.5 1" stroke="#d8d4e0" stroke-width=".8" fill="none"/></svg><div class="tree" style="left:43px;top:188px">movies [6]</div>
<svg class="a" style="left:31px;top:217px" width="10" height="10" viewBox="0 0 10 10"><path d="M4.8 .9L8.6 3v3.4L4.6 9.2 1 7V3.7z" fill="#b2aabb" stroke="#000" stroke-width="1.25" stroke-linejoin="round"/><path d="M2 4l2.5-1.5 2.5 1" stroke="#d8d4e0" stroke-width=".8" fill="none"/></svg><div class="tree" style="left:43px;top:211px">movies_sorted [21]</div>
<svg class="a" style="left:31px;top:240px" width="10" height="10" viewBox="0 0 10 10"><path d="M4.8 .9L8.6 3v3.4L4.6 9.2 1 7V3.7z" fill="#b2aabb" stroke="#000" stroke-width="1.25" stroke-linejoin="round"/><path d="M2 4l2.5-1.5 2.5 1" stroke="#d8d4e0" stroke-width=".8" fill="none"/></svg><div class="tree" style="left:43px;top:234px">reader [9]</div>
<svg class="a" style="left:31px;top:263px" width="10" height="10" viewBox="0 0 10 10"><path d="M4.8 .9L8.6 3v3.4L4.6 9.2 1 7V3.7z" fill="#b2aabb" stroke="#000" stroke-width="1.25" stroke-linejoin="round"/><path d="M2 4l2.5-1.5 2.5 1" stroke="#d8d4e0" stroke-width=".8" fill="none"/></svg><div class="tree" style="left:43px;top:257px">score [13]</div>
<svg class="a" style="left:8px;top:282px" width="14" height="15" viewBox="0 0 14 15" fill="none" stroke="#111" stroke-width="1.3"><path d="M3.5 1C2 1 2 2 2 3.5v1.5c0 .8-.5 1-1 1 .5 0 1 .2 1 1V8.5"/><path d="M10 5.5c1.5 0 1.5 1 1.5 2.5v1.5c0 .8.5 1 1 1-.5 0-1 .2-1 1v1.5c0 1-.5 1.5-1.5 1.5"/></svg><div class="tree" style="left:25px;top:280px">Importy</div>
<svg class="a" style="left:26px;top:305px" width="14" height="15" viewBox="0 0 14 15" fill="none" stroke="#111" stroke-width="1.3"><path d="M3.5 1C2 1 2 2 2 3.5v1.5c0 .8-.5 1-1 1 .5 0 1 .2 1 1V8.5"/><path d="M10 5.5c1.5 0 1.5 1 1.5 2.5v1.5c0 .8.5 1 1 1-.5 0-1 .2-1 1v1.5c0 1-.5 1.5-1.5 1.5"/></svg><div class="tree" style="left:43px;top:303px">csv [1]</div>
<svg class="a" style="left:-2px;top:146px" width="6" height="8" viewBox="0 0 6 8"><path d="M0 2l5 3" stroke="#888"/></svg><svg class="a" style="left:-2px;top:284px" width="6" height="8" viewBox="0 0 6 8"><path d="M0 2l5 3" stroke="#888"/></svg>
  <!-- editor -->
  <div class="a" style="left:156px;top:112px;width:42px;height:504px;background:#cfcfcf"></div><div class="a" style="left:155px;top:112px;width:3px;height:504px;background:#c4c4cc"></div>
  <div class="a" style="left:198px;top:112px;width:12px;height:504px;background:#dcdcdc"></div>
  <div class="a" style="left:210px;top:112px;width:657px;height:504px;background:#fff"></div>
  <div class="a" style="left:788px;top:112px;width:1px;height:504px;background:#c2e6c2"></div>
  <div class="a" style="left:203px;top:244px;width:1px;height:167px;background:#000"></div><div class="a" style="left:203px;top:410px;width:6px;height:1px;background:#000"></div><div class="a" style="left:203px;top:516px;width:1px;height:31px;background:#000"></div><div class="a" style="left:203px;top:546px;width:6px;height:1px;background:#000"></div><svg class="a" style="left:198px;top:234px" width="11" height="11" viewBox="0 0 11 11"><rect x=".5" y=".5" width="10" height="10" fill="#fff" stroke="#000"/><path d="M2.5 5.5h6" stroke="#000"/></svg><svg class="a" style="left:198px;top:285px" width="11" height="11" viewBox="0 0 11 11"><rect x=".5" y=".5" width="10" height="10" fill="#fff" stroke="#000"/><path d="M2.5 5.5h6" stroke="#000"/></svg><svg class="a" style="left:198px;top:370px" width="11" height="11" viewBox="0 0 11 11"><rect x=".5" y=".5" width="10" height="10" fill="#fff" stroke="#000"/><path d="M2.5 5.5h6" stroke="#000"/></svg><svg class="a" style="left:198px;top:506px" width="11" height="11" viewBox="0 0 11 11"><rect x=".5" y=".5" width="10" height="10" fill="#fff" stroke="#000"/><path d="M2.5 5.5h6" stroke="#000"/></svg>
  <div class="cl" style="top:111px"><span class="k">import</span> csv</div>
<div class="ln" style="top:111px">1</div>
<div class="cl" style="top:128px"></div>
<div class="ln" style="top:128px">2</div>
<div class="cl" style="top:145px"><span class="c"># nastav rok, ktorý chceš filtrovať</span></div>
<div class="ln" style="top:145px">3</div>
<div class="cl" style="top:162px">FILTER_YEAR = <span class="n">2021</span></div>
<div class="ln" style="top:162px">4</div>
<div class="cl" style="top:179px"></div>
<div class="ln" style="top:179px">5</div>
<div class="cl" style="top:196px">movies = []</div>
<div class="ln" style="top:196px">6</div>
<div class="cl" style="top:213px"></div>
<div class="ln" style="top:213px">7</div>
<div class="cl" style="top:230px"><span class="k">with</span> <span class="b">open</span>(<span class="s">&quot;Netflix3.csv&quot;</span>, newline=<span class="s">&#x27;&#x27;</span>, encoding=<span class="s">&quot;utf-8&quot;</span>) <span class="k">as</span> f:</div>
<div class="ln" style="top:230px">8</div>
<div class="cl" style="top:247px">    reader = csv.DictReader(f)</div>
<div class="ln" style="top:247px">9</div>
<div class="cl" style="top:264px"></div>
<div class="ln" style="top:264px">10</div>
<div class="cl" style="top:281px">    <span class="k">for</span> row <span class="k">in</span> reader:</div>
<div class="ln" style="top:281px">11</div>
<div class="cl" style="top:298px">        <span class="c"># oprava IMDB score (čiarka -&gt; bodka)</span></div>
<div class="ln" style="top:298px">12</div>
<div class="cl" style="top:315px">        score = <span class="b">float</span>(row[<span class="s">&quot;imdb_score&quot;</span>].replace(<span class="s">&quot;,&quot;</span>, <span class="s">&quot;.&quot;</span>))</div>
<div class="ln" style="top:315px">13</div>
<div class="cl" style="top:332px"></div>
<div class="ln" style="top:332px">14</div>
<div class="cl" style="top:349px">        <span class="c"># filtrovanie podľa roku</span></div>
<div class="ln" style="top:349px">15</div>
<div class="cl" style="top:366px">        <span class="k">if</span> <span class="b">int</span>(row[<span class="s">&quot;release_year&quot;</span>]) == FILTER_YEAR:</div>
<div class="ln" style="top:366px">16</div>
<div class="cl" style="top:383px">            row[<span class="s">&quot;imdb_score&quot;</span>] = score</div>
<div class="ln" style="top:383px">17</div>
<div class="cl" style="top:400px">            movies.append(row)</div>
<div class="ln" style="top:400px">18</div>
<div class="cl" style="top:417px"></div>
<div class="ln" style="top:417px">19</div>
<div class="cl" style="top:434px"><span class="c"># zoradenie podľa IMDB score (zostupne)</span></div>
<div class="ln" style="top:434px">20</div>
<div class="cl" style="top:451px">movies_sorted = <span class="b">sorted</span>(movies, key=<span class="k">lambda</span> x: x[<span class="s">&quot;imdb_score&quot;</span>], reverse=<span class="k">True</span>)</div>
<div class="ln" style="top:451px">21</div>
<div class="cl" style="top:468px"></div>
<div class="ln" style="top:468px">22</div>
<div class="cl" style="top:485px"><span class="c"># výpis výsledkov</span></div>
<div class="ln" style="top:485px">23</div>
<div class="cl" style="top:502px"><span class="k">for</span> movie <span class="k">in</span> movies_sorted:</div>
<div class="ln" style="top:502px">24</div>
<div class="cl" style="top:519px">    <span class="b">print</span>(<span class="s">f&#x27;{</span>movie[<span class="s">&quot;title&quot;</span>]<span class="s">} ({</span>movie[<span class="s">&quot;release_year&quot;</span>]<span class="s">}) - {</span>movie[<span class="s">&quot;imdb_score&quot;</span>]<span class="s">}&#x27;</span>)</div>
<div class="ln" style="top:519px">25</div>
<div class="cl" style="top:536px"></div>
<div class="ln" style="top:536px">26</div>
  <div class="a" style="left:156px;top:616px;width:711px;height:12px;background:#f8f8f8"></div>
  <div class="a" style="left:0;top:628px;width:867px;height:3px;background:#c9c9cd"></div>
  <div class="a" style="left:0;top:631px;width:867px;height:91px;background:#fff"></div>
  <div class="a" style="left:0;top:632px;width:867px;height:1px;background:repeating-linear-gradient(90deg,transparent 0 5px,#b4b4b4 5px 10px);background-position:1px 0"></div>
  <div class="a" style="left:0;top:720px;width:867px;height:1px;background:repeating-linear-gradient(90deg,transparent 0 5px,#b4b4b4 5px 10px);background-position:1px 0"></div>
  <div class="a" style="left:0;top:721px;width:867px;height:38px;background:#f8f8f8"></div>
  <div class="a" style="left:0;top:722px;width:867px;height:1px;background:#c9c9cd"></div>
  <div class="a nw" style="left:654px;top:732px;font-size:14px;line-height:18px;color:#3c3c3c">rámec: neznáme</div>
</div>
<div class="a" style="left:962px;top:759px;width:8px;height:109px;background:linear-gradient(180deg,#d0d0d0,#c4c4c4)"></div>
<div class="a" style="left:962px;top:648px;width:7px;height:28px;border:1px solid #c0c0c0;border-right:none;border-radius:3px 0 0 3px"></div>
<div id="term">
  <div class="a nw" style="left:0;top:8px;width:656px;text-align:center;font-size:14px;line-height:18px;color:#dcdcdc">linux7@linux7: ~/Stiahnuté</div>
  <div class="a" style="left:577px;top:19px;width:10px;height:1px;background:#e8e8e8"></div>
  <div class="a" style="left:605px;top:12px;width:10px;height:10px;border:1.5px solid #e8e8e8"></div>
  <div class="a" style="left:629px;top:8px;width:18px;height:18px;border-radius:50%;background:#2a9ee0"></div>
  <svg class="a" style="left:632px;top:11px" width="12" height="12" viewBox="0 0 12 12" stroke="#fff" stroke-width="1.4"><path d="M2.5 2.5l7 7M9.5 2.5l-7 7"/></svg>
  <div class="a" style="left:646px;top:36px;width:6px;height:40px;border-radius:3px;background:#7c7c7e"></div>
  <div class="tl" style="top:33px"><b style="color:#8ae234">linux7@linux7</b>:<b style="color:#729fcf">~/Stiahnuté</b>$ python3 netflix3.py</div>
<div class="tl" style="top:50px">Arcane (2021) - 9.1</div>
<div class="tl" style="top:67px">Navillera (2021) - 8.8</div>
<div class="tl" style="top:84px">Mighty Little Bheem: Kite Festival (2021) - 8.8</div>
<div class="tl" style="top:101px">Bo Burnham: Inside (2021) - 8.7</div>
<div class="tl" style="top:118px">Tear Along the Dotted Line (2021) - 8.7</div>
<div class="tl" style="top:135px">Move to Heaven (2021) - 8.6</div>
<div class="tl" style="top:152px">In Our Mothers&#x27; Gardens (2021) - 8.6</div>
<div class="tl" style="top:169px">Hometown Cha-Cha-Cha (2021) - 8.5</div>
<div class="tl" style="top:186px">Maid (2021) - 8.4</div>
<div class="tl" style="top:203px">Vincenzo (2021) - 8.4</div>
<div class="tl" style="top:220px">Falling Into Your Smile (2021) - 8.4</div>
<div class="tl" style="top:237px">Headspace Guide to Meditation (2021) - 8.4</div>
<div class="tl" style="top:254px">Young Royals (2021) - 8.3</div>
<div class="tl" style="top:271px">Last Chance U: Basketball (2021) - 8.3</div>
<div class="tl" style="top:288px">Love is Color Blind (2021) - 8.3</div>
<div class="tl" style="top:305px">Alma Matters: Inside the IIT Dream (2021) - 8.3</div>
<div class="tl" style="top:322px">Attenborough&#x27;s Life in Colour (2021) - 8.2</div>
<div class="tl" style="top:339px">WWII in Color: Road to Victory (2021) - 8.2</div>
<div class="tl" style="top:356px">Let&#x27;s Eat (2021) - 8.2</div>
<div class="tl" style="top:373px">Squid Game (2021) - 8.1</div>
<div class="tl" style="top:390px">The Alpinist (2021) - 8.1</div>
<div class="tl" style="top:407px">The Witcher: Nightmare of the Wolf (2021) - 8.1</div>
</div>

</body></html>
